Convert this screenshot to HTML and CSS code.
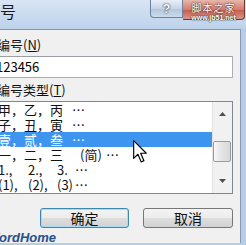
FILE: index.html
```html
<!DOCTYPE html>
<html lang="zh-CN">
<head>
    <meta charset="UTF-8">
    <title>编号</title>
    <link rel="stylesheet" href="styles.css">
</head>
<body>
    <div class="window">
        <div class="titlebar">
            <span class="title">号</span>
            <div class="caption">
                <span class="cap-btn help">?</span>
                <span class="cap-btn close">
                    <span class="wm-cn">脚本之家</span>
                    <span class="wm-url">www.jb51.net</span>
                </span>
            </div>
        </div>

        <div class="client">
            <div class="label">编号(<u>N</u>)</div>
            <div class="field">123456</div>

            <div class="label second">编号类型(<u>T</u>)</div>
            <div class="listbox">
                <div class="items">
                    <div class="item"><span>甲，</span><span>乙，</span><span>丙</span><span>…</span></div>
                    <div class="item"><span>子，</span><span>丑，</span><span>寅</span><span>…</span></div>
                    <div class="item selected"><span>壹，</span><span>贰，</span><span>叁</span><span>…</span></div>
                    <div class="item note"><span>一，</span><span>二，</span><span>三</span><span>(简)</span><span>…</span></div>
                    <div class="item num"><span>1.,</span><span>2.,</span><span>3.</span><span>…</span></div>
                    <div class="item num"><span>(1),</span><span>(2),</span><span>(3)</span><span>…</span></div>
                </div>
                <div class="scrollbar">
                    <div class="sb-btn up">
                        <svg width="7" height="4" viewBox="0 0 7 4"><polygon points="0,4 3.5,0 7,4" fill="#505050"/></svg>
                    </div>
                    <div class="sb-track"><div class="sb-thumb"></div></div>
                    <div class="sb-btn down">
                        <svg width="7" height="4" viewBox="0 0 7 4"><polygon points="0,0 7,0 3.5,4" fill="#505050"/></svg>
                    </div>
                </div>
            </div>

            <div class="buttons">
                <button class="btn default">确定</button>
                <button class="btn">取消</button>
            </div>
        </div>

        <div class="brand">WordHome</div>

        <!-- mouse pointer over the list -->
        <svg class="cursor" width="14" height="23" viewBox="0 0 12 20">
            <path d="M0.5,0.5 L0.5,16 L4.2,12.4 L7,19 L9.4,18 L6.6,11.5 L11.5,11.5 Z" fill="#fff" stroke="#000" stroke-width="1" stroke-linejoin="round"/>
        </svg>
    </div>
</body>
</html>
```

FILE: styles.css
```css
* {
    box-sizing: border-box;
}
body {
    margin: 0;
    width: 246px;
    height: 245px;
    overflow: hidden;
    background: #b7cce5;
    font-family: "Noto Sans CJK SC", "Liberation Sans", sans-serif;
    font-size: 13px;
    color: #000;
}
.window {
    position: relative;
    height: 245px;
    display: flex;
    flex-direction: column;
}

/* title bar */
.titlebar {
    flex: none;
    height: 29px;
    display: flex;
    justify-content: space-between;
    align-items: flex-start;
    background: linear-gradient(to bottom, #d8e5f4, #bdd2eb);
}
.title {
    font-size: 16px;
    line-height: 20px;
    padding-top: 1px;
    color: #1c1c1c;
}
.caption {
    display: flex;
    margin-right: 1px;
}
.cap-btn {
    display: flex;
    align-items: center;
}
.help {
    width: 33px;
    height: 18px;
    justify-content: center;
    border: 1px solid #6d819e;
    border-top: none;
    border-radius: 0 0 0 4px;
    background: linear-gradient(to bottom, #e8eff8, #c6d5e8 50%, #b2c5dd 51%, #cddbec);
    color: #fff;
    font: bold 13px "Liberation Sans", sans-serif;
    text-shadow: 0 0 2px #2a3c58, 0 0 1px #2a3c58;
}
.close {
    width: 62px;
    height: 20px;
    flex-direction: column;
    border: 1px solid #6a3a33;
    border-top: none;
    border-left: none;
    border-radius: 0 0 4px 0;
    background: linear-gradient(to bottom, #e9b6ac, #d57d6f 50%, #c65b4d 51%, #dc9587);
}
.wm-cn {
    font-size: 10px;
    line-height: 12px;
    margin-top: 2px;
    letter-spacing: 1px;
    color: #fff;
    text-shadow: 0 0 1px #4a1a14, 0 0 2px #4a1a14;
}
.wm-url {
    font: bold 7px "Liberation Sans", sans-serif;
    line-height: 8px;
    color: #fff;
    text-shadow: 0 0 1px #222, 0 0 2px #222;
}

/* client area */
.client {
    flex: none;
    height: 214px;
    margin-right: 5px;
    padding-right: 7px;
    background: #f0f0f0;
    border-top: 1px solid #8798b0;
    border-right: 1px solid #8798b0;
}
.label {
    margin: 7px 0 0 -3px;
    line-height: 15px;
    color: #111;
}
.label.second {
    margin-top: 4px;
}
.field {
    margin: 4px 0 0 -20px;
    height: 22px;
    padding-left: 15px;
    line-height: 20px;
    background: #fff;
    border: 1px solid #abadb3;
    border-top-color: #9a9da4;
}

.listbox {
    margin: 4px 0 0 -20px;
    height: 93px;
    display: flex;
    background: #fff;
    border: 1px solid #828790;
}
.items {
    flex: 1;
    padding-left: 17px;
}
.item {
    display: grid;
    grid-template-columns: 26px 26px 22px auto;
    height: 15px;
    line-height: 15px;
    color: #111;
}
.item.note {
    grid-template-columns: 26px 26px 30px 26px auto;
}
.item.num {
    grid-template-columns: 30px 29px 18px auto;
}
.item.selected {
    background: #3d95f0;
    color: #fff;
}

.scrollbar {
    width: 20px;
    display: flex;
    flex-direction: column;
    background: #f1f1f1;
    border-left: 1px solid #e2e2e2;
}
.sb-btn {
    height: 17px;
    display: flex;
    justify-content: center;
    align-items: flex-start;
}
.sb-btn.up {
    padding-top: 10px;
}
.sb-btn.down {
    padding-top: 3px;
}
.sb-track {
    flex: 1;
    padding-top: 22px;
}
.sb-thumb {
    height: 21px;
    margin: 0 1px 0 0;
    border: 1px solid #9b9b9b;
    border-radius: 2px;
    background: linear-gradient(to right, #f6f6f6, #e4e4e4 50%, #d8d8d8);
}

/* dialog buttons */
.buttons {
    margin-top: 14px;
    display: flex;
    justify-content: flex-end;
    gap: 14px;
}
.btn {
    width: 90px;
    height: 20px;
    padding: 0;
    font-family: inherit;
    font-size: 14px;
    line-height: 18px;
    color: #111;
    border: 1px solid #777;
    border-radius: 3px;
    background: linear-gradient(to bottom, #f4f4f4, #ececec 50%, #dedede 51%, #d2d2d2);
}
.btn.default {
    width: 89px;
    border-color: #3f88ad;
    box-shadow: inset 0 0 0 1px #a9dcf2;
}

/* overlays */
.brand {
    position: absolute;
    left: -13px;
    bottom: 0;
    font: italic bold 13px "Liberation Sans", sans-serif;
    line-height: 14px;
    color: #27508a;
    text-shadow: 0 0 1px #e8eef6;
}
.cursor {
    position: absolute;
    left: 133px;
    top: 140px;
}
```
